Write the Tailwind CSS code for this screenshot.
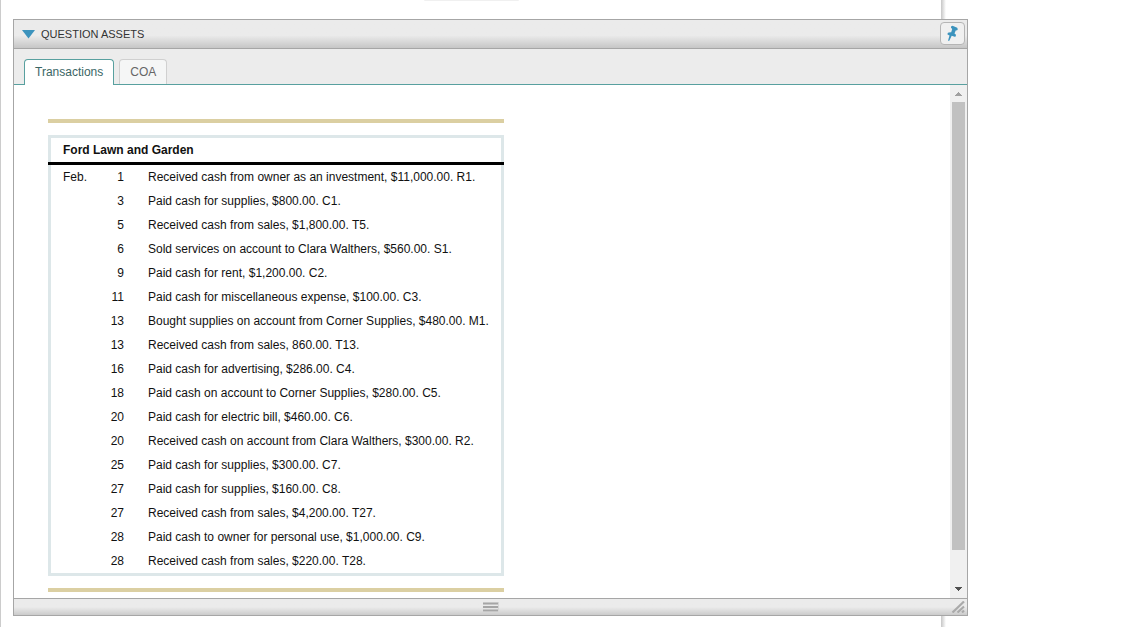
<!DOCTYPE html>
<html lang="en">
<head>
<meta charset="utf-8">
<title>Question Assets</title>
<script src="https://cdn.jsdelivr.net/npm/@tailwindcss/browser@4"></script>
</head>
<body class="relative flex h-screen flex-col overflow-hidden bg-white pt-[19px] pr-[177px] pb-[11px] pl-[13px] font-['Liberation_Sans',Arial,sans-serif] text-xs text-[#111]">
  <!-- page sheet behind the floating panel -->
  <div class="absolute inset-y-0 left-0 right-[199px] flex" aria-hidden="true">
    <div class="flex-1 border-l border-[#ccc]"><div class="ml-[423px] h-px w-[95px] rounded-b bg-[#f0f0f0]"></div></div>
    <div class="w-[5px] bg-linear-to-r from-[#c6c6c6] to-white"></div>
  </div>

  <section class="relative flex min-h-0 flex-1 flex-col border border-[#a6a6a6] bg-white">
    <header class="flex h-[29px] shrink-0 items-center border-b border-[#a6a6a6] bg-linear-to-b from-[#ebebeb] from-55% to-[#c6c6c6] pr-0.5 pl-2">
      <button type="button" class="flex flex-1 items-center gap-1.5 text-left text-[11px] text-[#333]">
        <svg class="h-[9px] w-[13px]" viewBox="0 0 13 9"><path d="M0 0h13L6.500 8.500z" fill="#3c93bd"/></svg>
        QUESTION ASSETS
      </button>
      <button type="button" aria-label="Pin panel" class="mb-0.5 flex h-[23px] w-[25px] items-center justify-center rounded border border-[#b5b5b5] bg-[#f0f0f0]">
        <svg class="h-[17px] w-[13px]" viewBox="0 0 13 17"><path d="M5 1.500l1.500-.7 4.700 2 .6 1.500-.6 1-1.500.2L8.500 8.500l1.500 1.300-.3 1.600-1 .4-3-1L3.300 15.800H2l1.500-5.300L1.500 9.400 1.700 8l1-.6 2.500-.2L6.200 4 5 2.800z" fill="#3c93bd"/></svg>
      </button>
    </header>

    <nav class="flex h-9 shrink-0 items-end gap-[5px] border-b border-[#58a09f] bg-[#ececec] pl-2.5" role="tablist">
      <button type="button" role="tab" aria-selected="true" class="relative -mb-px h-[26px] rounded-t border border-b-0 border-[#58a09f] bg-white px-2.5 pb-px text-[#3a6665]">Transactions</button>
      <button type="button" role="tab" aria-selected="false" class="h-[25px] rounded-t border border-b-0 border-[#d0d0d0] bg-[#f5f6f6] px-2.5 text-[#666]">COA</button>
    </nav>

    <div class="flex min-h-0 flex-1">
      <main class="min-w-0 flex-1 overflow-hidden pt-[34px] pl-[34px]">
        <div class="w-[456px] border-y-4 border-[#dbcfa2] py-3">
          <h2 class="flex h-[27px] items-center border-x-3 border-t-3 border-[#dde7e9] px-3 font-bold">Ford Lawn and Garden</h2>
          <div class="h-[3px] bg-black"></div>
          <div class="border-x-3 border-b-3 border-[#dde7e9]">
            <table class="w-full table-fixed border-collapse [&_td]:h-6 [&_td]:p-0 [&_td:nth-child(1)]:pl-3 [&_td:nth-child(2)]:text-right [&_td:nth-child(3)]:pl-6 [&_td]:whitespace-nowrap">
              <colgroup><col class="w-11"><col class="w-[29px]"><col></colgroup>
              <tbody>
                <tr><td>Feb.</td><td>1</td><td>Received cash from owner as an investment, $11,000.00. R1.</td></tr>
                <tr><td></td><td>3</td><td>Paid cash for supplies, $800.00. C1.</td></tr>
                <tr><td></td><td>5</td><td>Received cash from sales, $1,800.00. T5.</td></tr>
                <tr><td></td><td>6</td><td>Sold services on account to Clara Walthers, $560.00. S1.</td></tr>
                <tr><td></td><td>9</td><td>Paid cash for rent, $1,200.00. C2.</td></tr>
                <tr><td></td><td>11</td><td>Paid cash for miscellaneous expense, $100.00. C3.</td></tr>
                <tr><td></td><td>13</td><td>Bought supplies on account from Corner Supplies, $480.00. M1.</td></tr>
                <tr><td></td><td>13</td><td>Received cash from sales, 860.00. T13.</td></tr>
                <tr><td></td><td>16</td><td>Paid cash for advertising, $286.00. C4.</td></tr>
                <tr><td></td><td>18</td><td>Paid cash on account to Corner Supplies, $280.00. C5.</td></tr>
                <tr><td></td><td>20</td><td>Paid cash for electric bill, $460.00. C6.</td></tr>
                <tr><td></td><td>20</td><td>Received cash on account from Clara Walthers, $300.00. R2.</td></tr>
                <tr><td></td><td>25</td><td>Paid cash for supplies, $300.00. C7.</td></tr>
                <tr><td></td><td>27</td><td>Paid cash for supplies, $160.00. C8.</td></tr>
                <tr><td></td><td>27</td><td>Received cash from sales, $4,200.00. T27.</td></tr>
                <tr><td></td><td>28</td><td>Paid cash to owner for personal use, $1,000.00. C9.</td></tr>
                <tr><td></td><td>28</td><td>Received cash from sales, $220.00. T28.</td></tr>
              </tbody>
            </table>
          </div>
        </div>
      </main>
      <div class="flex w-[17px] flex-col items-center bg-[#f0f0f0]" aria-hidden="true">
        <svg class="h-[17px] w-[17px] shrink-0" viewBox="0 0 17 17" shape-rendering="crispEdges"><path d="M8 7h1v1h1v1h1v1h1v1H5v-1h1V9h1V8h1z" fill="#a0a0a0"/></svg>
        <div class="w-[13px] flex-1 bg-[#c1c1c1]"></div>
        <div class="h-8 shrink-0"></div>
        <svg class="h-4 w-[17px] shrink-0" viewBox="0 0 17 16" shape-rendering="crispEdges"><path d="M5 5h7v1h-1v1h-1v1H9v1H8V8H7V7H6V6H5z" fill="#505050"/></svg>
      </div>
    </div>

    <footer class="grid h-[17px] shrink-0 grid-cols-[1fr_auto_1fr] items-center border-t border-[#a6a6a6] bg-linear-to-b from-[#ebebeb] from-50% to-[#cbcbcb]">
      <svg class="col-start-2 h-2.5 w-4" viewBox="0 0 16 10" shape-rendering="crispEdges"><path d="M0 0h15v3H0zM0 4h15v2H0zM0 7h15v3H0z" fill="#c6c6c6"/><path d="M0 1h15v1H0zM0 4h15v2H0zM0 8h15v1H0z" fill="#a6a6a6"/><path d="M15 0h1v10h-1z" fill="#d6d6d6"/></svg>
      <svg class="mr-0.5 h-3 w-[14px] justify-self-end" viewBox="0 0 14 12"><path d="M1.500 11.500L13 .5M6.500 11.500L13 5.500M11 11.500l2-2" stroke="#aaa" stroke-width="2.200" fill="none"/></svg>
    </footer>
  </section>
</body>
</html>
